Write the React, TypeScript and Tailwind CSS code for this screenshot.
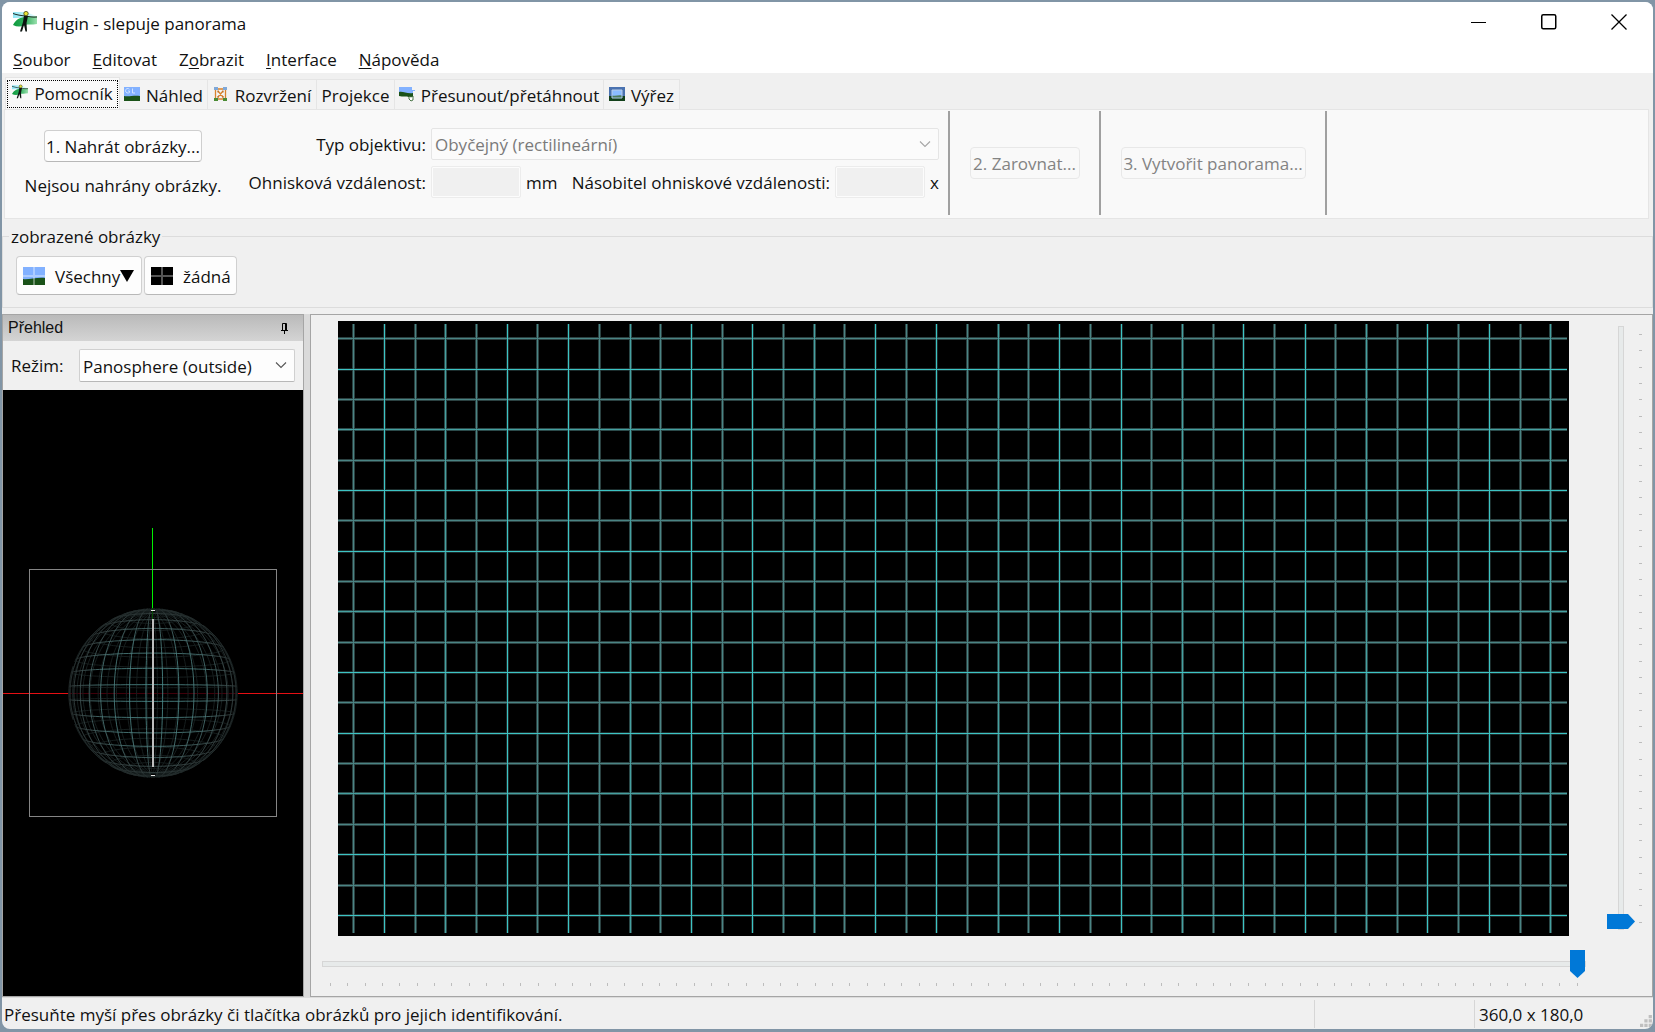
import { useState } from 'react';

type TabIcon = 'hugin' | 'gl' | 'layout' | 'drag' | 'crop' | null;

const MENU = [
  { before: '', key: 'S', after: 'oubor' },
  { before: '', key: 'E', after: 'ditovat' },
  { before: 'Z', key: 'o', after: 'brazit' },
  { before: '', key: 'I', after: 'nterface' },
  { before: '', key: 'N', after: 'ápověda' },
];

const TABS: { label: string; icon: TabIcon; width: string }[] = [
  { label: 'Pomocník', icon: 'hugin', width: 'w-[115px]' },
  { label: 'Náhled', icon: 'gl', width: 'w-[88px]' },
  { label: 'Rozvržení', icon: 'layout', width: 'w-[109px]' },
  { label: 'Projekce', icon: null, width: 'w-[78px]' },
  { label: 'Přesunout/přetáhnout', icon: 'drag', width: 'w-[209px]' },
  { label: 'Výřez', icon: 'crop', width: 'w-[76px]' },
];

function HuginIcon({ className }: { className: string }) {
  return (
    <svg className={className} viewBox="0 0 24 22" aria-hidden="true">
      <defs>
        <linearGradient id="sky" x1="0" x2="1" y1="0" y2="0">
          <stop offset="0" stopColor="#8fe6f5" />
          <stop offset="1" stopColor="#e4fafc" />
        </linearGradient>
        <linearGradient id="hill" x1="0" x2="1" y1="0" y2="0">
          <stop offset="0" stopColor="#0c9a3c" />
          <stop offset=".5" stopColor="#2fae5c" />
          <stop offset="1" stopColor="#9be0ae" />
        </linearGradient>
      </defs>
      <path d="M0 1h13l10 4v2H0z" fill="url(#sky)" />
      <path d="M0 14C3 8 8 6 13 6l11-1v8c-5 1-9 0-12 1-4 2-8 2-12 0z" fill="url(#hill)" />
      <path d="M0 2.500c4 1.500 8 2 12 2.500 4 .5 8 1.500 12 1" stroke="#1c2b22" strokeWidth="1" fill="none" />
      <path d="M11 4.500l4 .5-1.500 7 .5 8.500h-1.500L11 14l-2 6.500H7L10 11z" fill="#0c1410" />
      <circle cx="13" cy="2.600" r="2.200" fill="#e8e337" stroke="#44430f" strokeWidth=".8" />
    </svg>
  );
}

function TabGlyph({ icon }: { icon: TabIcon }) {
  if (icon === 'hugin') return <HuginIcon className="w-4 h-4 shrink-0 -mt-1" />;
  if (icon === 'gl')
    return (
      <svg className="w-4 h-4 shrink-0 -mt-1" viewBox="0 0 16 16" aria-hidden="true">
        <path d="M0 1h16v10H0z" fill="#82b1ff" />
        <path d="M0 10c5 1 10-1 16 0v5H0z" fill="#1a5218" />
        <path
          d="M5.500 3.200C4 1.800 1.500 2.500 1.500 4.700s2.500 3 4 1.800V5H4M8.500 2.500V7H11"
          stroke="#cfe2ff"
          strokeWidth="1"
          fill="none"
        />
      </svg>
    );
  if (icon === 'layout')
    return (
      <svg className="w-4 h-4 shrink-0 -mt-1" viewBox="0 0 16 16" aria-hidden="true">
        <path d="M1 1h4v3H1zM10 1h4v3h-4z" fill="#7fa8d8" />
        <path d="M1 12h4v3H1zM10 12h4v3h-4z" fill="#4b8b34" />
        <path
          d="M2.500 4v8M12.500 4v8M5 3h5M5 13h5M5 5l5 6M10 5l-5 6"
          stroke="#d9822b"
          strokeWidth="1.300"
          fill="none"
        />
        <path d="M5 4.500v2M10 4.500v2M5 10v2M10 10v2" stroke="#b5651d" strokeWidth="1" />
      </svg>
    );
  if (icon === 'drag')
    return (
      <svg className="w-4 h-4 shrink-0 -mt-1" viewBox="0 0 16 16" aria-hidden="true">
        <path d="M0 1h13v3h3v1h-2v4H0z" fill="#82b1ff" />
        <path d="M0 6c4-1 8 2 14 1v4l-3 1-1-1c-3-1-6 0-10-1z" fill="#1a5218" />
        <path d="M10 10l2 1 2-1v4l-2 1-2-2z" fill="#fff" stroke="#1a5218" strokeWidth=".8" />
      </svg>
    );
  if (icon === 'crop')
    return (
      <svg className="w-4 h-4 shrink-0 -mt-1" viewBox="0 0 16 16" aria-hidden="true">
        <path d="M0 1h16v9H0z" fill="#4a72b0" />
        <path d="M0 10h16v5H0z" fill="#12401a" />
        <path d="M3 4h10v8H3z" fill="#8bbcff" stroke="#b9cde6" />
        <path d="M3.500 9.500c3 1 6-1 9 0v2h-9z" fill="#4f7d58" />
      </svg>
    );
  return null;
}

function Chevron({ className }: { className: string }) {
  return (
    <svg className={className} viewBox="0 0 12 8" fill="none" aria-hidden="true">
      <path d="M1 1.500l5 5 5-5" stroke="currentColor" strokeWidth="1.100" />
    </svg>
  );
}

// Sphere seen by a perspective camera
const CAMERA = 4.32;
const FOCAL = 354;
const STEP = 9;
const rad = (deg: number) => (deg * Math.PI) / 180;

function project(lat: number, lon: number) {
  const depth = Math.cos(rad(lat)) * Math.cos(rad(lon));
  const k = FOCAL / (CAMERA - depth);
  return {
    x: 150 + k * Math.cos(rad(lat)) * Math.sin(rad(lon)),
    y: 303 - k * Math.sin(rad(lat)),
    front: depth > 1 / CAMERA,
  };
}

function buildPath(points: { x: number; y: number; front: boolean }[], front: boolean) {
  let d = '';
  let pen = false;
  for (const p of points) {
    if (p.front === front) {
      d += `${pen ? 'L' : 'M'}${p.x.toFixed(1)} ${p.y.toFixed(1)}`;
      pen = true;
    } else {
      pen = false;
    }
  }
  return d;
}

function sphereLines(front: boolean) {
  const parallels: string[] = [];
  const meridians: string[] = [];
  for (let lat = -85.5; lat < 90; lat += STEP) {
    const pts = [];
    for (let lon = 0; lon <= 360; lon += 3) pts.push(project(lat, lon + 180));
    parallels.push(buildPath(pts, front));
  }
  for (let lon = 5.2; lon < 360; lon += STEP) {
    const pts = [];
    for (let lat = -87; lat <= 87; lat += 3) pts.push(project(lat, lon));
    meridians.push(buildPath(pts, front));
  }
  return [...parallels, ...meridians].join('');
}

const FRONT_LINES = sphereLines(true);
const BACK_LINES = sphereLines(false);

function Panosphere() {
  return (
    <svg className="w-full h-full" viewBox="0 0 300 606" role="img" aria-label="Panosphere">
      <defs>
        <radialGradient id="fade" gradientUnits="userSpaceOnUse" cx="150" cy="303" r="86">
          <stop offset="0" stopColor="#4a8f8f" />
          <stop offset=".65" stopColor="#4c7a7a" />
          <stop offset=".9" stopColor="#3a4848" />
          <stop offset="1" stopColor="#1e2525" />
        </radialGradient>
      </defs>
      <path d="M65 303.500h170" stroke="#40000a" />
      <path d={BACK_LINES} stroke="#161e1e" strokeWidth="1" fill="none" />
      <path d={FRONT_LINES} stroke="url(#fade)" strokeWidth="1" fill="none" opacity=".85" />
      <path d="M0 303.500h65M235 303.500h65" stroke="#e60f14" />
      <path d="M149.500 218v12" stroke="#064d06" />
      <path d="M149.500 138v80" stroke="#00f000" />
      <path d="M150 229v148" stroke="#bdbdbd" strokeWidth="2" />
      <path d="M148 220.500h4M148 385.500h4" stroke="#e5e5e5" />
      <rect x="26.500" y="179.500" width="247" height="247" fill="none" stroke="#858585" />
    </svg>
  );
}

const isSharp = (i: number) => i % 2 === 1 && i % 6 !== 3;
const isMedium = (i: number) => i % 6 === 3;
const isSoft = (i: number) => i % 2 === 0;

function gridPath(pick: (i: number) => boolean) {
  let d = '';
  for (let i = 0; i < 40; i++) {
    if (pick(i)) d += `M${Math.floor(15.8 + i * 30.69) + 0.5} 3v609`;
  }
  for (let i = 0; i < 20; i++) {
    if (pick(i)) d += `M0 ${Math.floor(17.7 + i * 30.35) + 0.5}h1229`;
  }
  return d;
}

function PanoramaGrid() {
  return (
    <svg
      className="block w-full h-full"
      viewBox="0 0 1231 615"
      preserveAspectRatio="none"
      role="img"
      aria-label="Panorama"
      fill="none"
    >
      <path d={gridPath(isSharp)} stroke="#1b2b2b" strokeWidth="3" />
      <path d={gridPath(isMedium)} stroke="#2b4a4a" strokeWidth="3" />
      <path d={gridPath(isSoft)} stroke="#2b4141" strokeWidth="3" />
      <path d={gridPath(isSoft)} stroke="#4a8484" strokeWidth="1" />
      <path d={gridPath(isMedium)} stroke="#45a0a0" strokeWidth="1" />
      <path d={gridPath(isSharp)} stroke="#3cc4c4" strokeWidth="1" />
    </svg>
  );
}

function Ticks({ count, vertical }: { count: number; vertical?: boolean }) {
  return (
    <div
      aria-hidden="true"
      className={vertical ? 'h-full flex flex-col justify-between' : 'w-full flex justify-between'}
    >
      {Array.from({ length: count }, (_, i) => (
        <span key={i} className={vertical ? 'w-[3px] h-px bg-[#bdbdbd]' : 'h-[3px] w-px bg-[#bdbdbd]'} />
      ))}
    </div>
  );
}

function App() {
  const [activeTab, setActiveTab] = useState('Pomocník');
  const [mode, setMode] = useState('outside');

  return (
    <div className="min-h-screen flex flex-col bg-[#8195a6] px-[2px] pt-[2px] pb-[3px] font-['Open_Sans',sans-serif] text-[17px] leading-6 text-[#111]">
      <div className="flex-1 flex flex-col bg-[#f0f0f0] rounded-lg overflow-hidden">
        {/* Title bar */}
        <header className="bg-white">
          <div className="h-11 flex items-center justify-between pl-[11px] pr-[26px]">
            <h1 className="flex items-center gap-[5px]">
              <HuginIcon className="w-6 h-[22px] -mt-1" />
              Hugin - slepuje panorama
            </h1>
            <div className="flex items-center gap-[54px] pb-1">
              <button aria-label="Minimalizovat">
                <svg className="w-4 h-4" viewBox="0 0 16 16" aria-hidden="true">
                  <path d="M0 8.500h15" stroke="#000" />
                </svg>
              </button>
              <button aria-label="Maximalizovat">
                <svg className="w-4 h-4" viewBox="0 0 16 16" aria-hidden="true">
                  <rect x=".75" y=".75" width="14" height="14" rx="1.500" fill="none" stroke="#000" strokeWidth="1.500" />
                </svg>
              </button>
              <button aria-label="Zavřít">
                <svg className="w-4 h-4" viewBox="0 0 16 16" aria-hidden="true">
                  <path d="M.5.5l15 15M15.500.5l-15 15" stroke="#000" strokeWidth="1.300" />
                </svg>
              </button>
            </div>
          </div>
          <nav className="h-[27px] flex items-center gap-[22px] pl-[11px]">
            {MENU.map((item) => (
              <button key={item.key} className="hover:bg-gray-100">
                {item.before}
                <span className="underline underline-offset-2">{item.key}</span>
                {item.after}
              </button>
            ))}
          </nav>
        </header>

        {/* Tabs */}
        <div role="tablist" className="flex items-end h-9 pl-[3px]">
          {TABS.map((tab) => {
            const active = tab.label === activeTab;
            return (
              <button
                key={tab.label}
                role="tab"
                aria-selected={active}
                onClick={() => setActiveTab(tab.label)}
                className={`flex items-center whitespace-nowrap border border-[#e5e5e5] border-b-0 ${tab.width} ${
                  active ? 'h-8 bg-[#f9f9f9] p-px' : 'h-[30px] bg-[#f3f3f3] border-l-0'
                }`}
              >
                <span
                  className={`flex-1 flex items-center justify-center gap-1.5 ${
                    active ? 'h-7 border border-dotted border-black' : 'pt-0.5'
                  }`}
                >
                  <TabGlyph icon={tab.icon} />
                  {tab.label}
                </span>
              </button>
            );
          })}
        </div>

        {/* Assistant panel */}
        <section
          role="tabpanel"
          className="flex h-[110px] ml-[2px] mr-1 border border-[#e5e5e5] bg-[#f9f9f9] whitespace-nowrap"
        >
          <div className="w-[236px] flex flex-col items-center pt-5 gap-3">
            <button className="h-8 w-[158px] pt-0.5 rounded border border-[#cfcfcf] border-b-[#b8b8b8] bg-[#fdfdfd]">
              1. Nahrát obrázky...
            </button>
            <p>Nejsou nahrány obrázky.</p>
          </div>
          <form className="w-[698px] flex flex-col pt-[18px] gap-[6px]">
            <div className="flex items-center gap-[5px]">
              <label htmlFor="lens" className="w-[185px] pt-0.5 text-right">
                Typ objektivu:
              </label>
              <div className="relative flex-1">
                <select
                  id="lens"
                  disabled
                  className="appearance-none w-full h-8 px-[3px] pt-0.5 rounded-xs border border-[#e5e5e5] bg-[#fbfbfb] text-[#7a7a7a] disabled:opacity-100"
                >
                  <option>Obyčejný (rectilineární)</option>
                </select>
                <Chevron className="absolute right-2 top-3 w-3 h-2 text-[#a5a5a5] pointer-events-none" />
              </div>
            </div>
            <div className="flex items-center gap-[5px]">
              <label htmlFor="focal" className="w-[185px] pt-0.5 text-right">
                Ohnisková vzdálenost:
              </label>
              <input
                id="focal"
                disabled
                className="w-[90px] h-8 rounded-xs border border-[#ececec] bg-[#f0f0f0] shadow-[inset_0_0_0_1px_#fcfcfc]"
              />
              <span className="pt-0.5">mm</span>
              <label htmlFor="factor" className="flex-1 pt-0.5 text-right">
                Násobitel ohniskové vzdálenosti:
              </label>
              <input
                id="factor"
                disabled
                className="w-[90px] h-8 rounded-xs border border-[#ececec] bg-[#f0f0f0] shadow-[inset_0_0_0_1px_#fcfcfc]"
              />
              <span className="pt-0.5">x</span>
            </div>
          </form>
          <div className="flex items-center justify-center w-[153px] mt-px mb-[3px] ml-[9px] border-x-2 border-[#a0a0a0]">
            <button disabled className="h-8 w-[110px] pt-0.5 rounded border border-[#e8e8e8] text-[#838383]">
              2. Zarovnat...
            </button>
          </div>
          <div className="flex items-center justify-center w-[226px] mt-px mb-[3px] border-r-2 border-[#a0a0a0]">
            <button disabled className="h-8 w-[185px] pt-0.5 rounded border border-[#e8e8e8] text-[#838383]">
              3. Vytvořit panorama...
            </button>
          </div>
        </section>

        {/* Displayed images */}
        <fieldset className="h-[85px] mt-1 border border-[#dcdcdc] pl-[13px]">
          <legend className="-ml-[7px] px-[2px] pt-0.5">zobrazené obrázky</legend>
          <div className="flex gap-[2px] pt-[7px]">
            <button className="flex items-center h-[39px] w-[126px] pl-1.5 rounded border border-[#d0d0d0] border-b-[#b8b8b8] bg-[#fdfdfd]">
              <svg className="w-[22px] h-[18px] mr-2.5 shrink-0" viewBox="0 0 22 18" aria-hidden="true">
                <path d="M0 0h22v18H0z" fill="#82b1ff" />
                <path d="M0 12c5 1 14-2 22-1v7H0z" fill="#1a5218" />
                <path d="M11 0v18M0 9h22" stroke="#fff" strokeWidth="2" opacity=".35" />
              </svg>
              <span className="pt-0.5">Všechny</span>
              <svg className="w-3.5 h-3 shrink-0" viewBox="0 0 14 12" aria-hidden="true">
                <path d="M0 0h14L7 12z" fill="#000" />
              </svg>
            </button>
            <button className="flex items-center h-[39px] w-[93px] pl-1.5 rounded border border-[#d0d0d0] border-b-[#b8b8b8] bg-[#fdfdfd]">
              <svg className="w-[22px] h-[18px] mr-2.5 shrink-0" viewBox="0 0 22 18" aria-hidden="true">
                <path d="M0 0h22v18H0z" fill="#000" />
                <path d="M11 0v18M0 9h22" stroke="#555" strokeWidth="2" />
              </svg>
              <span className="pt-0.5">žádná</span>
            </button>
          </div>
        </fieldset>

        {/* Overview and preview */}
        <main className="flex-1 flex mt-1.5 bg-[#dadada]">
          <aside className="w-[302px] mr-1.5 flex flex-col border border-[#a5a5a5] bg-[#f0f0f0]">
            <div className="flex items-center justify-between h-[26px] pl-[5px] pr-[15px] bg-linear-to-b from-[#bababa] to-[#d4d4d4]">
              <h2 className="font-['Liberation_Sans',sans-serif] text-[16px]">Přehled</h2>
              <button aria-label="Připnout">
                <svg className="w-[7px] h-[11px]" viewBox="0 0 7 11" aria-hidden="true">
                  <path d="M1.500 7V.5h4V7M0 7.500h7M3.500 8v3" stroke="#000" fill="none" />
                  <path d="M4 1h2v6H4z" fill="#000" />
                </svg>
              </button>
            </div>
            <div className="flex items-center h-[49px] px-2">
              <label htmlFor="mode" className="w-[68px]">
                Režim:
              </label>
              <div className="relative flex-1">
                <select
                  id="mode"
                  value={mode}
                  onChange={(e) => setMode(e.target.value)}
                  className="appearance-none w-full h-[33px] px-[3px] pt-0.5 rounded-xs border border-[#d0d0d0] border-b-[#b8b8b8] bg-[#fdfdfd]"
                >
                  <option value="outside">Panosphere (outside)</option>
                </select>
                <Chevron className="absolute right-2 top-3 w-3 h-2 text-[#555] pointer-events-none" />
              </div>
            </div>
            <div className="flex-1 min-h-0 bg-black">
              <Panosphere />
            </div>
          </aside>

          <section className="flex-1 flex flex-col border border-[#a5a5a5] bg-[#f0f0f0]">
            <div className="flex pl-[27px] pt-1.5">
              <div className="flex-1 aspect-[1231/615] bg-black">
                <PanoramaGrid />
              </div>
              <div className="w-[83px] flex items-stretch pl-[38px] gap-1 pt-[5px] pb-1.5">
                <input
                  type="range"
                  aria-label="Svislé zorné pole"
                  min={0}
                  max={180}
                  defaultValue={180}
                  className="appearance-none bg-transparent w-7 h-auto [writing-mode:vertical-lr] [&::-webkit-slider-runnable-track]:w-1.5 [&::-webkit-slider-runnable-track]:bg-[#e7eaea] [&::-webkit-slider-runnable-track]:border [&::-webkit-slider-runnable-track]:border-[#d6d6d6] [&::-webkit-slider-thumb]:appearance-none [&::-webkit-slider-thumb]:w-7 [&::-webkit-slider-thumb]:h-[15px] [&::-webkit-slider-thumb]:-ml-3 [&::-webkit-slider-thumb]:bg-[#0078d7] [&::-webkit-slider-thumb]:[clip-path:polygon(0_0,75%_0,100%_50%,75%_100%,0_100%)]"
                />
                <div className="pt-2 pb-[7px]">
                  <Ticks count={37} vertical />
                </div>
              </div>
            </div>
            <div className="pl-[11px] pr-[66px] pt-[13px]">
              <input
                type="range"
                aria-label="Vodorovné zorné pole"
                min={0}
                max={360}
                defaultValue={360}
                className="block appearance-none bg-transparent w-full h-[30px] [&::-webkit-slider-runnable-track]:h-1.5 [&::-webkit-slider-runnable-track]:bg-[#e7eaea] [&::-webkit-slider-runnable-track]:border [&::-webkit-slider-runnable-track]:border-[#d6d6d6] [&::-webkit-slider-thumb]:appearance-none [&::-webkit-slider-thumb]:w-[15px] [&::-webkit-slider-thumb]:h-7 [&::-webkit-slider-thumb]:-mt-3 [&::-webkit-slider-thumb]:bg-[#0078d7] [&::-webkit-slider-thumb]:[clip-path:polygon(0_0,100%_0,100%_75%,50%_100%,0_75%)]"
              />
              <div className="px-2 pt-1">
                <Ticks count={73} />
              </div>
            </div>
          </section>
        </main>

        {/* Status bar */}
        <footer className="flex h-8 items-center border-t border-[#dcdcdc] whitespace-nowrap">
          <p className="flex-1 pl-[2px] pt-0.5">
            Přesuňte myší přes obrázky či tlačítka obrázků pro jejich identifikování.
          </p>
          <div className="w-40 h-7 border-l border-[#d6d6d6]" />
          <div className="w-[179px] h-7 flex items-center justify-between pl-1 border-l border-[#d6d6d6]">
            <span className="pt-0.5">360,0 x 180,0</span>
            <svg className="w-[13px] h-[13px] self-end" viewBox="0 0 12 12" fill="#bfbfbf" aria-hidden="true">
              <path d="M8 0h3v3H8zM4 4h3v3H4zM8 4h3v3H8zM0 8h3v3H0zM4 8h3v3H4zM8 8h3v3H8z" />
            </svg>
          </div>
        </footer>
      </div>
    </div>
  );
}

export default App;
